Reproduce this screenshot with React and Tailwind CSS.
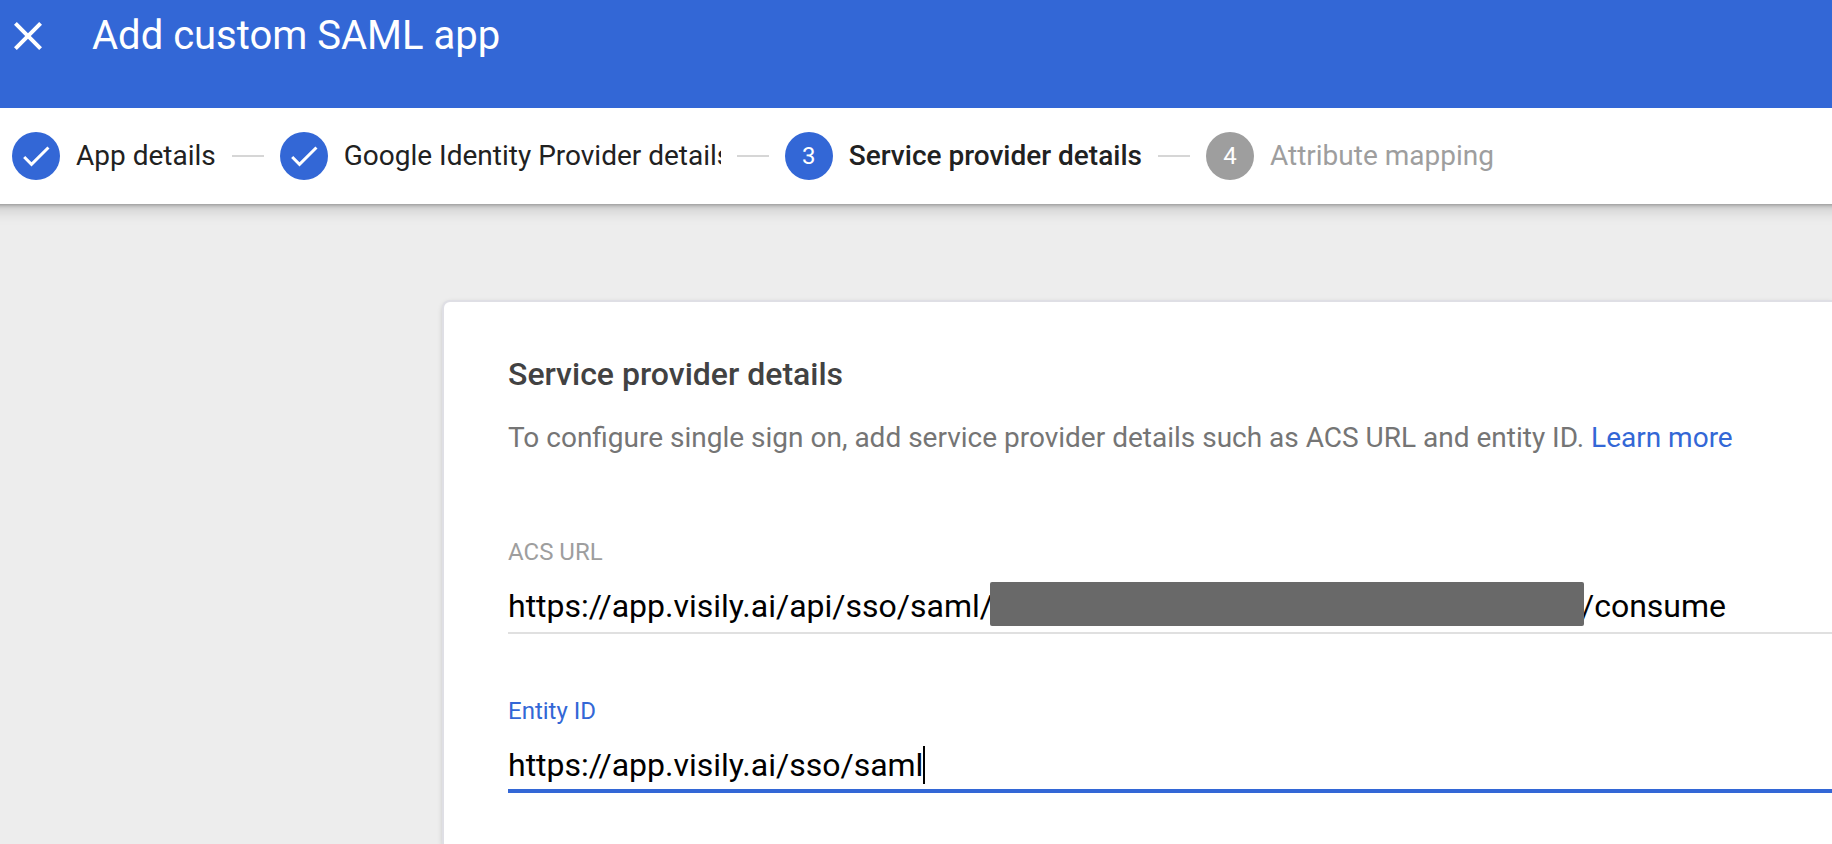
import { useState } from 'react'
import { MdCheck, MdClose } from 'react-icons/md'

const steps = [
  { label: 'App details', status: 'done' },
  { label: 'Google Identity Provider details', status: 'done', labelClass: 'w-[377px]' },
  { label: 'Service provider details', status: 'current' },
  { label: 'Attribute mapping', status: 'upcoming' },
]

const labelColors = {
  done: 'text-[#212121]',
  current: 'text-[#212121] font-medium',
  upcoming: 'text-[#9e9e9e]',
}

const Step = ({ number, step }) => (
  <li className="flex items-center gap-4" aria-current={step.status === 'current' ? 'step' : undefined}>
    {number > 1 && <span className="w-8 h-0.5 bg-[#d6d6d6]" />}
    <span
      className={`size-12 rounded-full flex items-center justify-center text-2xl text-white ${
        step.status === 'upcoming' ? 'bg-[#9e9e9e]' : 'bg-[#3367d6]'
      }`}
    >
      {step.status === 'done' ? <MdCheck className="size-9" /> : number}
    </span>
    <span
      className={`text-[28px] leading-10 whitespace-nowrap overflow-hidden ${labelColors[step.status]} ${step.labelClass || ''}`}
    >
      {step.label}
    </span>
  </li>
)

const App = () => {
  const [acsPrefix, setAcsPrefix] = useState('https://app.visily.ai/api/sso/saml/')
  const [acsSuffix, setAcsSuffix] = useState('/consume')
  const [entityId, setEntityId] = useState('https://app.visily.ai/sso/saml')

  return (
    <div className="min-h-screen flex flex-col bg-[#ededed] font-[Roboto,sans-serif] overflow-hidden">
      <header className="relative z-10 h-27 px-1 pt-3 flex items-start gap-10 bg-[#3367d6] text-white">
        <button type="button" aria-label="Close">
          <MdClose className="size-12" />
        </button>
        <h1 className="text-[40px] leading-12">Add custom SAML app</h1>
      </header>

      <nav aria-label="Progress" className="-mx-6 px-9 py-6 bg-white shadow-[0_1px_4px_rgba(0,0,0,0.3),0_4px_16px_rgba(0,0,0,0.2)]">
        <ol className="flex items-center gap-4">
          {steps.map((step, index) => (
            <Step key={step.label} number={index + 1} step={step} />
          ))}
        </ol>
      </nav>

      <main className="flex-1 flex flex-col pt-[98px] pl-[444px]">
        <section className="flex-1 bg-white rounded-tl-md pl-16 pt-12 shadow-[0_0_0_2px_#dfdfe5,0_2px_6px_rgba(0,0,0,0.3)]">
          <h2 className="text-[32px] leading-12 font-medium text-[#424242]">Service provider details</h2>
          <p className="mt-5 text-[28px] leading-10 text-[#757575]">
            To configure single sign on, add service provider details such as ACS URL and entity ID.{' '}
            <a href="#learn-more" className="text-[#3367d6]">Learn more</a>
          </p>

          <div className="mt-[78px]">
            <label htmlFor="acs-url" className="block text-2xl text-[#9e9e9e]">ACS URL</label>
            <div className="mt-3.5 pb-1.5 flex items-center border-b-2 border-[#e0e0e0] text-[32px] leading-10 text-black">
              <input
                id="acs-url"
                type="text"
                value={acsPrefix}
                onChange={(e) => setAcsPrefix(e.target.value)}
                className="pt-1 field-sizing-content outline-none"
              />
              {/* tenant id is masked, the mask overlaps the slashes on both sides */}
              <span className="relative -mx-[3px] shrink-0 w-[594px] h-11 rounded-xs bg-[#696969]" />
              <input
                type="text"
                aria-label="ACS URL ending"
                value={acsSuffix}
                onChange={(e) => setAcsSuffix(e.target.value)}
                className="pt-1 min-w-0 flex-1 outline-none"
              />
            </div>
          </div>

          <div className="mt-[61px]">
            <label htmlFor="entity-id" className="block text-2xl text-[#3367d6]">Entity ID</label>
            <div className="mt-3.5 pb-1 flex items-center border-b-4 border-[#3367d6] text-[32px] leading-10 text-black">
              <input
                id="entity-id"
                type="text"
                value={entityId}
                onChange={(e) => setEntityId(e.target.value)}
                className="pt-1 field-sizing-content outline-none"
              />
              {/* text cursor */}
              <span className="mt-1 w-0.5 h-9.5 bg-black" />
            </div>
          </div>
        </section>
      </main>
    </div>
  )
}

export default App
